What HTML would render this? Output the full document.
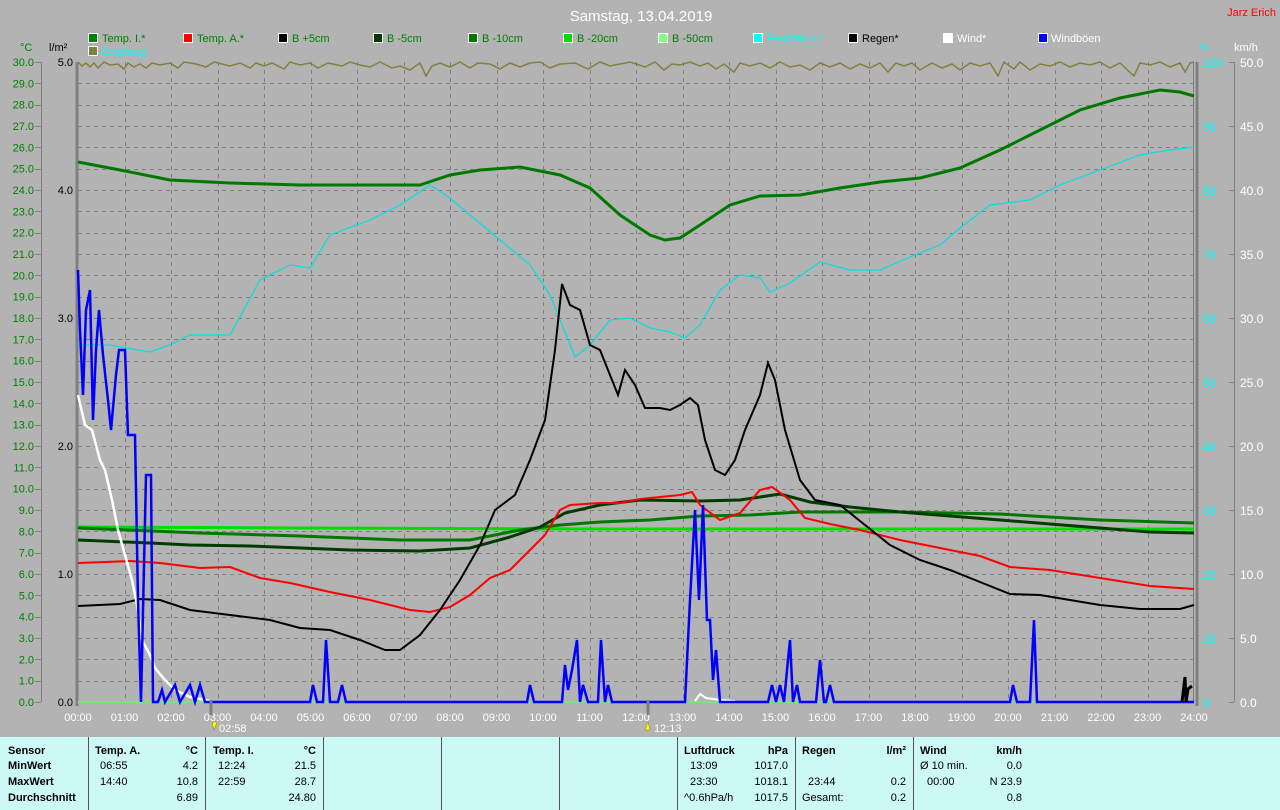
<!DOCTYPE html>
<html><head><meta charset="utf-8"><style>
body{margin:0;width:1280px;height:810px;overflow:hidden;background:#b3b3b3;font-family:"Liberation Sans",sans-serif}
svg{position:absolute;left:0;top:0}
.tb{position:absolute;left:0;top:737px;width:1280px;height:73px;background:#ccf8f6}
.tb div{position:absolute;font-size:11px;color:#000;white-space:nowrap}
.b{font-weight:bold}
.sep{position:absolute;top:0;width:1px;height:73px;background:#555}
</style></head><body>
<svg width="1280" height="810" font-family="Liberation Sans, sans-serif" font-size="11">
<text x="641" y="21" fill="#fff" font-size="15" text-anchor="middle">Samstag, 13.04.2019</text>
<text x="1276" y="16" fill="#f00" font-size="11" text-anchor="end">Jarz Erich</text>
<g stroke="#fff" stroke-width="1">
<rect x="88.5" y="33.5" width="9" height="9" fill="#008000"/>
<rect x="183.5" y="33.5" width="9" height="9" fill="#f00"/>
<rect x="278.5" y="33.5" width="9" height="9" fill="#000"/>
<rect x="373.5" y="33.5" width="9" height="9" fill="#003c00"/>
<rect x="468.5" y="33.5" width="9" height="9" fill="#007800"/>
<rect x="563.5" y="33.5" width="9" height="9" fill="#00dd00"/>
<rect x="658.5" y="33.5" width="9" height="9" fill="#80ff80"/>
<rect x="753.5" y="33.5" width="9" height="9" fill="#0ff"/>
<rect x="848.5" y="33.5" width="9" height="9" fill="#000"/>
<rect x="943.5" y="33.5" width="9" height="9" fill="#fff"/>
<rect x="1038.5" y="33.5" width="9" height="9" fill="#00f"/>
<rect x="88.5" y="46.5" width="9" height="9" fill="#808040"/>
</g>
<g font-size="11">
<text x="102" y="42" fill="#008000">Temp. I.*</text>
<text x="197" y="42" fill="#008000">Temp. A.*</text>
<text x="292" y="42" fill="#008000">B +5cm</text>
<text x="387" y="42" fill="#008000">B -5cm</text>
<text x="482" y="42" fill="#008000">B -10cm</text>
<text x="577" y="42" fill="#008000">B -20cm</text>
<text x="672" y="42" fill="#008000">B -50cm</text>
<text x="767" y="42" fill="#0ff">Feuchte A.*</text>
<text x="862" y="42" fill="#000">Regen*</text>
<text x="957" y="42" fill="#fff">Wind*</text>
<text x="1051" y="42" fill="#fff">Windböen</text>
<text x="102" y="55" fill="#0ff">Empfang</text>
<text x="20" y="51" fill="#008000">°C</text>
<text x="49" y="51" fill="#000">l/m²</text>
<text x="1199" y="51" fill="#0ff">%</text>
<text x="1234" y="51" fill="#fff">km/h</text>
</g>
<g stroke="#808080" stroke-dasharray="4,4" stroke-width="1" id="grid"></g>
<line x1="41.5" y1="62" x2="41.5" y2="702" stroke="#808080"/>
<line x1="1234.5" y1="62" x2="1234.5" y2="702" stroke="#808080"/>
<line x1="77" y1="62" x2="77" y2="706" stroke="#808080" stroke-width="3"/>
<line x1="1197" y1="62" x2="1197" y2="706" stroke="#808080" stroke-width="3"/>
<line x1="1193.5" y1="62" x2="1193.5" y2="702" stroke="#808080"/>
<g id="labels"></g>
<polyline fill="none" stroke="#80e080" stroke-width="2" points="78,702 1194,702"/>
<polyline fill="none" stroke="#808040" stroke-width="1.5" points="78,62 82,66 86,63 90,67 94,63 98,68 104,62 110,65 118,64 124,69 128,63 134,67 140,64 146,68 152,63 160,65 170,63 178,68 184,62 196,64 206,67 214,62 230,66 240,63 250,68 256,63 264,66 272,63 284,69 290,62 300,65 310,63 318,68 328,63 342,66 350,62 360,65 370,67 380,62 392,68 400,66 410,70 420,63 426,76 432,66 440,63 450,67 460,62 470,68 478,63 490,64 500,69 510,63 520,67 530,63 540,62 550,68 560,64 575,63 588,69 600,62 610,66 620,64 630,62 645,67 655,62 664,70 672,64 680,65 690,62 700,66 708,63 716,69 724,64 734,72 740,63 750,66 760,63 770,68 780,62 790,67 800,65 810,70 820,63 830,67 840,63 850,69 860,64 870,68 880,63 888,72 896,63 904,66 912,63 920,70 932,63 942,68 952,64 960,70 970,63 980,66 990,63 998,76 1004,62 1014,69 1020,62 1030,70 1040,64 1050,66 1060,62 1070,67 1080,63 1090,65 1100,62 1110,68 1120,63 1134,76 1140,63 1150,65 1160,62 1170,67 1180,63 1185,72 1190,63 1194,62"/>
<polyline fill="none" stroke="#007800" stroke-width="3" points="78,162 120,170 170,180 230,183 300,185 420,185 450,175 480,170 520,167 560,175 590,188 620,215 650,235 665,240 680,238 700,225 730,205 760,196 800,195 840,188 880,182 920,178 960,168 1000,150 1040,130 1080,110 1120,98 1160,90 1180,92 1194,96"/>
<polyline fill="none" stroke="#00e0e0" stroke-width="1.2" points="78,345 110,345 150,352 170,345 190,335 230,335 260,280 290,265 310,268 330,235 370,220 400,205 430,185 450,198 470,215 500,240 530,265 550,295 575,357 590,345 610,320 630,318 650,328 670,332 685,338 700,325 720,290 740,275 760,278 770,292 790,283 820,262 850,270 880,270 910,257 940,245 960,228 990,205 1030,200 1060,185 1100,170 1140,155 1170,150 1194,147"/>
<polyline fill="none" stroke="#00dd00" stroke-width="3" points="78,527 300,528 600,529 900,529 1194,529"/>
<polyline fill="none" stroke="#007800" stroke-width="3" points="78,528 200,533 300,536 400,540 470,540 520,530 560,525 600,522 650,520 700,516 750,515 800,512 900,512 1000,514 1100,520 1194,523"/>
<polyline fill="none" stroke="#003c00" stroke-width="3" points="78,540 150,543 190,545 250,546 350,550 420,551 470,548 510,537 540,527 565,513 600,505 640,500 700,501 740,500 760,497 780,494 810,502 850,507 900,512 950,516 1000,520 1050,524 1100,528 1150,532 1194,533"/>
<polyline fill="none" stroke="#f00" stroke-width="2" points="78,563 130,561 160,563 200,568 230,567 260,578 290,583 330,592 370,600 410,610 430,612 450,607 470,595 490,578 510,570 530,550 545,535 560,510 570,505 600,503 620,503 640,499 660,497 680,495 692,492 700,505 720,520 740,513 760,490 772,487 790,500 805,518 830,524 860,530 900,540 940,548 980,556 1010,567 1050,570 1100,578 1150,586 1194,589"/>
<polyline fill="none" stroke="#000" stroke-width="2" points="78,606 120,604 140,599 160,600 190,610 230,615 270,620 300,628 330,630 360,640 385,650 400,650 420,635 440,610 460,580 480,545 495,510 515,495 530,460 545,420 555,350 562,284 570,305 580,310 590,345 600,350 610,375 618,395 625,370 635,385 645,408 660,408 670,410 680,405 690,398 698,405 705,440 715,470 725,475 735,460 745,430 760,395 768,363 775,380 785,430 800,480 815,500 840,505 865,525 890,545 920,560 950,570 980,582 1010,594 1040,595 1070,600 1100,605 1140,609 1180,609 1194,605"/>
<polyline fill="none" stroke="#fff" stroke-width="2.5" points="78,395 85,425 92,430 100,460 105,470 112,500 118,530 125,555 132,580 138,610 142,640 150,655 155,668 165,680 175,690 190,697 210,701"/>
<polyline fill="none" stroke="#fff" stroke-width="2" points="695,701 700,694 706,698 720,700 735,701"/>
<polyline fill="none" stroke="#00f" stroke-width="2.5" points="78,270 80,330 83,395 86,310 90,290 93,420 96,350 99,310 103,355 108,400 111,430 116,375 119,350 125,350 128,435 135,435 138,600 141,702 146,475 151,475 153,702 158,702 162,690 165,702 175,685 180,702 190,685 195,702 200,685 205,702 310,702 313,685 317,702 323,702 326,640 330,702 338,702 342,685 346,702 527,702 530,685 534,702 562,702 565,665 568,690 572,670 577,640 580,702 583,685 588,702 598,702 601,640 605,702 608,685 612,702 685,702 690,600 695,510 699,600 703,505 707,620 710,620 713,680 716,650 720,702 768,702 772,685 776,702 780,685 784,702 788,660 790,640 793,702 797,685 800,702 816,702 820,660 824,702 826,702 830,685 834,702 1010,702 1013,685 1017,702 1030,702 1034,620 1037,702 1194,702"/>
<polyline fill="none" stroke="#000" stroke-width="3" points="1182,702 1185,677 1186,702 1188,689 1192,686"/>
<line x1="211" y1="700" x2="211" y2="715" stroke="#808080" stroke-width="3"/>
<line x1="648" y1="700" x2="648" y2="715" stroke="#808080" stroke-width="3"/>
<polygon points="212,722 217,722 214,730" fill="#ff0" stroke="#880" stroke-width="0.5"/>
<polygon points="645,730 650,730 648,722" fill="#ff0" stroke="#880" stroke-width="0.5"/>
<text x="219" y="732" fill="#fff">02:58</text>
<text x="654" y="732" fill="#fff">12:13</text>
</svg>
<div class="tb">
<div class="sep" style="left:88px"></div><div class="sep" style="left:205px"></div><div class="sep" style="left:323px"></div><div class="sep" style="left:441px"></div><div class="sep" style="left:559px"></div><div class="sep" style="left:677px"></div><div class="sep" style="left:795px"></div><div class="sep" style="left:913px"></div>
<div class="b" style="left:8px;top:8px">Sensor</div>
<div class="b" style="left:8px;top:23px">MinWert</div>
<div class="b" style="left:8px;top:39px">MaxWert</div>
<div class="b" style="left:8px;top:55px">Durchschnitt</div>
<div class="b" style="left:95px;top:8px">Temp. A.</div><div class="b" style="right:1082px;top:8px">°C</div>
<div style="left:100px;top:23px">06:55</div><div style="right:1082px;top:23px">4.2</div>
<div style="left:100px;top:39px">14:40</div><div style="right:1082px;top:39px">10.8</div>
<div style="right:1082px;top:55px">6.89</div>
<div class="b" style="left:213px;top:8px">Temp. I.</div><div class="b" style="right:964px;top:8px">°C</div>
<div style="left:218px;top:23px">12:24</div><div style="right:964px;top:23px">21.5</div>
<div style="left:218px;top:39px">22:59</div><div style="right:964px;top:39px">28.7</div>
<div style="right:964px;top:55px">24.80</div>
<div class="b" style="left:684px;top:8px">Luftdruck</div><div class="b" style="right:492px;top:8px">hPa</div>
<div style="left:690px;top:23px">13:09</div><div style="right:492px;top:23px">1017.0</div>
<div style="left:690px;top:39px">23:30</div><div style="right:492px;top:39px">1018.1</div>
<div style="left:684px;top:55px">^0.6hPa/h</div><div style="right:492px;top:55px">1017.5</div>
<div class="b" style="left:802px;top:8px">Regen</div><div class="b" style="right:374px;top:8px">l/m²</div>
<div style="left:808px;top:39px">23:44</div><div style="right:374px;top:39px">0.2</div>
<div style="left:802px;top:55px">Gesamt:</div><div style="right:374px;top:55px">0.2</div>
<div class="b" style="left:920px;top:8px">Wind</div><div class="b" style="right:258px;top:8px">km/h</div>
<div style="left:920px;top:23px">Ø 10 min.</div><div style="right:258px;top:23px">0.0</div>
<div style="left:927px;top:39px">00:00</div><div style="right:258px;top:39px">N 23.9</div>
<div style="right:258px;top:55px">0.8</div>
</div>
<script>
var NS="http://www.w3.org/2000/svg",g=document.getElementById("grid"),L=document.getElementById("labels");
function ln(p,a){var e=document.createElementNS(NS,"line");for(var k in a)e.setAttribute(k,a[k]);p.appendChild(e);}
function tx(s,a){var e=document.createElementNS(NS,"text");for(var k in a)e.setAttribute(k,a[k]);e.textContent=s;L.appendChild(e);}
var X0=78,XW=46.5;
for(var h=1;h<24;h++){var x=Math.round(X0+h*XW)+.5;ln(g,{x1:x,y1:62,x2:x,y2:702});}
for(var k=1;k<30;k++){var y=Math.round(62+k*640/30)+.5;ln(g,{x1:78,y1:y,x2:1194,y2:y});}
for(var k=0;k<=30;k++){var y=702-k*640/30;tx(k.toFixed(1),{x:34,y:y+4,fill:"#008000","text-anchor":"end"});ln(L,{x1:35,y1:Math.round(y)+.5,x2:41,y2:Math.round(y)+.5,stroke:"#808080"});}
for(var k=0;k<=5;k++){var y=702-k*128;tx(k.toFixed(1),{x:73,y:y+4,fill:"#000","text-anchor":"end"});}
for(var k=0;k<=10;k++){var y=702-k*64;tx(String(k*10),{x:1203,y:y+5,fill:"#0ff","font-size":"12"});ln(L,{x1:1229,y1:Math.round(y)+.5,x2:1234,y2:Math.round(y)+.5,stroke:"#808080"});tx((k*5).toFixed(1),{x:1240,y:y+5,fill:"#fff","font-size":"12"});}
for(var h=0;h<=24;h++){var x=X0+h*XW;tx((h<10?"0":"")+h+":00",{x:x,y:721,fill:"#fff","text-anchor":"middle"});}
</script>
</body></html>
